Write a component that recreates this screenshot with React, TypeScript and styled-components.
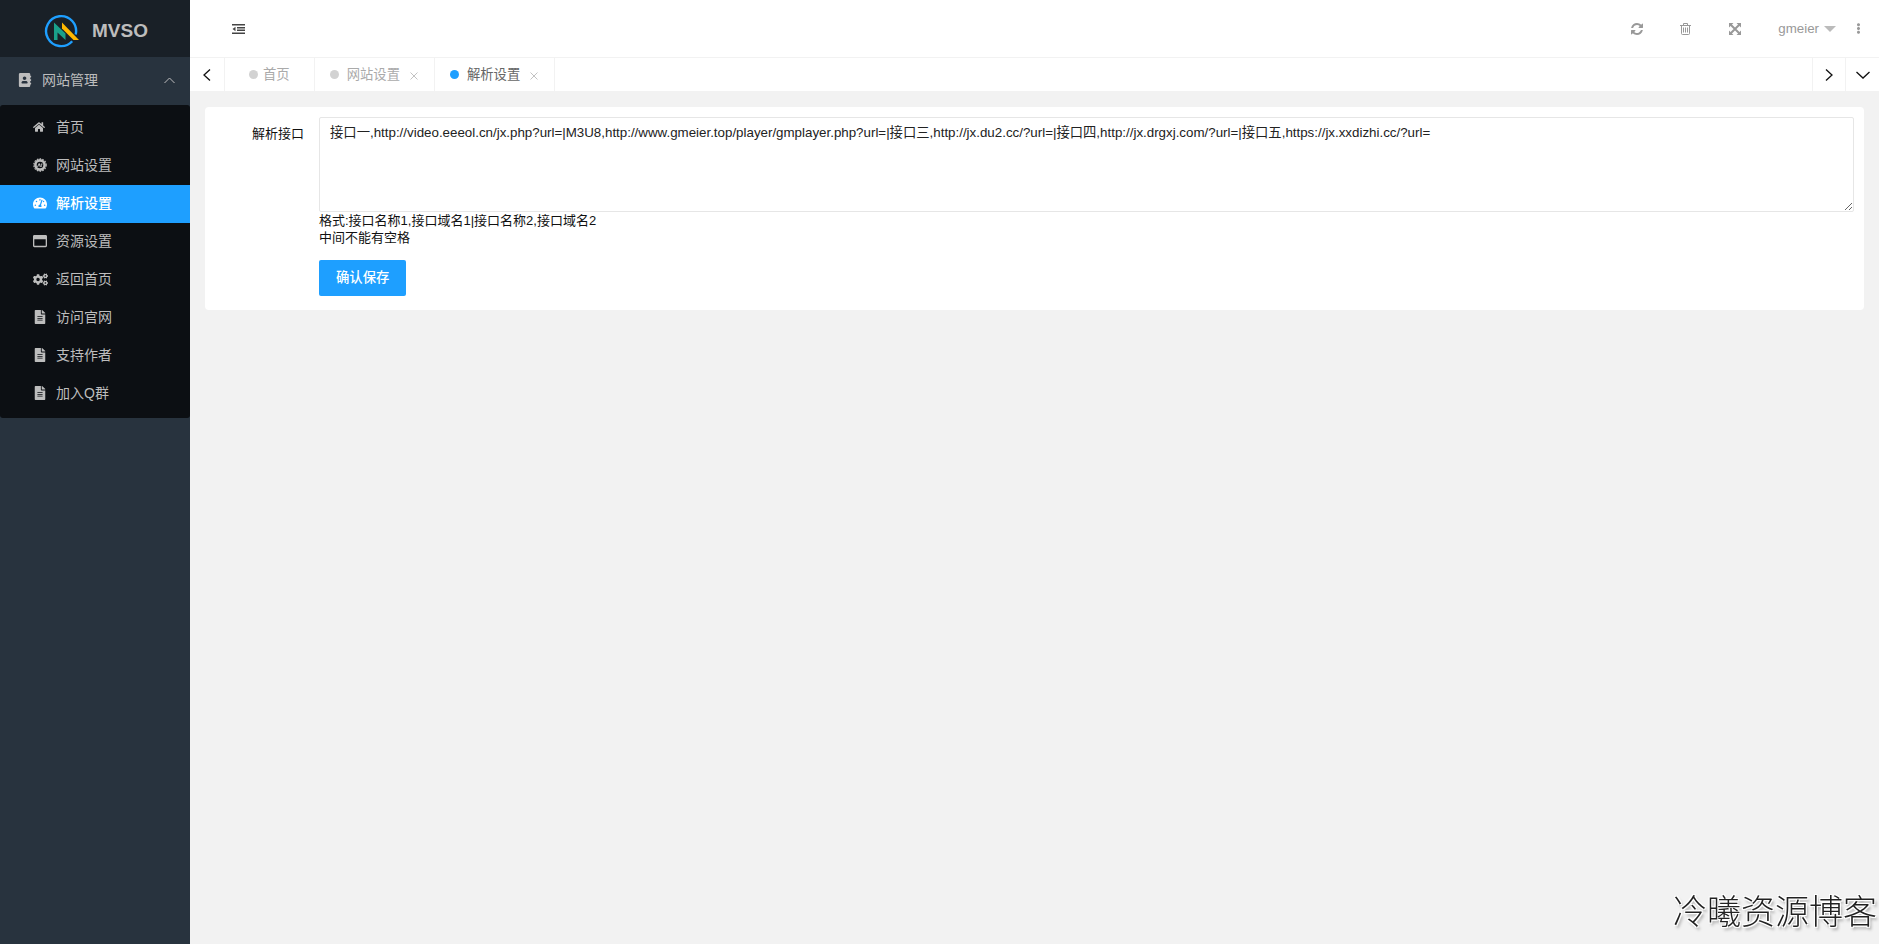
import React from 'react';
import styled, { createGlobalStyle, css } from 'styled-components';
import {
  FaAddressBook,
  FaCogs,
  FaEllipsisV,
  FaFileAlt,
  FaHome,
  FaRegWindowMaximize,
  FaTachometerAlt,
} from 'react-icons/fa';

const GlobalStyle = createGlobalStyle`
  *, *::before, *::after { box-sizing: border-box; }
  body {
    margin: 0;
    background: #f2f2f2;
    color: #111;
    font-family: "Liberation Sans", "Noto Sans CJK SC", sans-serif;
    font-size: 13px;
  }
  button, textarea { font-family: inherit; }
  button { border: 0; padding: 0; background: none; color: inherit; cursor: pointer; }
  a { color: inherit; text-decoration: none; }
  svg { display: block; flex: none; }
`;

const Shell = styled.div`
  display: flex;
  min-height: 100vh;
`;

const Sidebar = styled.aside`
  flex: none;
  width: 190px;
  background: #28333e;
  color: #bdbdbd;
`;

const Brand = styled.a`
  display: flex;
  align-items: center;
  justify-content: center;
  gap: 13px;
  height: 57px;
  padding: 4px 0 0 2px;
  background: #192027;
  font-size: 19px;
  font-weight: bold;
`;

const GroupButton = styled.button`
  display: flex;
  align-items: center;
  gap: 10px;
  width: 100%;
  height: 48px;
  padding: 0 15px 2px 18px;
  font-size: 14px;
  text-align: left;
`;

const MenuLabel = styled.span`
  flex: 1;
  padding-bottom: 2px;
`;

const SubMenu = styled.nav`
  padding: 4px 0 5px;
  border-radius: 3px;
  background: #0c0f13;
`;

const MenuLink = styled.a<{ $active?: boolean }>`
  display: flex;
  align-items: center;
  gap: 8px;
  height: 38px;
  padding: 0 0 2px 33px;
  font-size: 14px;
  ${(p) => p.$active && css`background: #1e9fff; color: #fff; font-weight: 500;`}
`;

const IconSlot = styled.span`
  display: flex;
  flex: none;
  width: 15px;
`;

const Main = styled.div`
  flex: 1;
  min-width: 0;
`;

const TopBar = styled.header`
  display: flex;
  align-items: center;
  justify-content: space-between;
  height: 57px;
  padding-left: 16px;
  background: #fff;
  color: #999;
`;

const Tools = styled.div`
  display: flex;
  align-items: center;
`;

const ToolButton = styled.button<{ $width?: number; $dark?: boolean }>`
  display: flex;
  align-items: center;
  justify-content: center;
  width: ${(p) => p.$width ?? 49}px;
  height: 57px;
  ${(p) => p.$dark && css`color: #444;`}
`;

const UserButton = styled.button`
  display: flex;
  align-items: center;
  gap: 5px;
  height: 57px;
  padding: 0 2px 0 19px;
  color: #999;
`;

const Caret = styled.i`
  border: 6px solid transparent;
  border-top-color: #bbb;
  border-bottom: 0;
`;

const TabBar = styled.div`
  display: flex;
  height: 34px;
  border-top: 1px solid #f2f2f2;
  background: #fff;
`;

const TabList = styled.div`
  display: flex;
  flex: 1;
`;

const TabArrow = styled.button<{ $side: 'left' | 'right' }>`
  display: flex;
  align-items: center;
  justify-content: center;
  width: ${(p) => (p.$side === 'left' ? 35 : 33)}px;
  border-${(p) => (p.$side === 'left' ? 'right' : 'left')}: 1px solid #f2f2f2;
  color: #111;

  &:last-child { width: 34px; }
`;

const Tab = styled.div<{ $active?: boolean; $home?: boolean }>`
  display: flex;
  align-items: center;
  gap: ${(p) => (p.$home ? 5 : 8)}px;
  padding: ${(p) => (p.$home ? '0 24px' : '0 16px 0 15px')};
  border-right: 1px solid #f2f2f2;
  color: ${(p) => (p.$active ? '#666' : '#aaa')};
`;

const TabLabel = styled.button`
  padding-bottom: 2px;
`;

const Dot = styled.i<{ $active?: boolean }>`
  width: 9px;
  height: 9px;
  border-radius: 50%;
  background: ${(p) => (p.$active ? '#1e9fff' : '#d2d2d2')};
`;

const CloseButton = styled.button`
  margin: 2px 0 0 2px;
  color: #c2c2c2;
`;

const Card = styled.form`
  display: flex;
  margin: 16px 15px;
  padding: 10px 10px 14px;
  border-radius: 4px;
  background: #fff;
`;

const Label = styled.label`
  flex: none;
  width: 104px;
  padding: 7px 15px 0 0;
  line-height: 20px;
  text-align: right;
`;

const Field = styled.div`
  flex: 1;
  min-width: 0;
`;

const TextArea = styled.textarea`
  display: block;
  width: 100%;
  height: 95px;
  padding: 5px 10px;
  border: 1px solid #e6e6e6;
  border-radius: 2px;
  outline: none;
  background: #fff;
  color: #222;
  line-height: 20px;
  resize: vertical;
`;

const Hint = styled.p`
  margin: 0 0 14px;
  line-height: 17px;
`;

const SaveButton = styled.button`
  height: 36px;
  padding: 0 17px 3px;
  border-radius: 2px;
  background: #1e9fff;
  color: #fff;
  font-weight: 500;
`;

const Watermark = styled.div`
  position: fixed;
  right: 2px;
  bottom: 14px;
  color: #222;
  font-family: "Noto Sans CJK SC", sans-serif;
  font-size: 34px;
  font-weight: 300;
  line-height: 40px;
  text-shadow: 1px 1px 0 #fff, -1px -1px 0 #fff, 1px -1px 0 #fff, -1px 1px 0 #fff, 2px 3px 3px #999;
  pointer-events: none;
`;

const Logo = () => (
  <svg width="35" height="34" viewBox="0 0 35 34" fill="none" aria-hidden="true">
    <path d="M28.2 27.2A15 15 0 1 1 31.7 20.5" stroke="#1e9fff" strokeWidth="2.4" />
    <path d="M10 8.5L21.5 19.5V26L13.5 18.5V26H10Z" fill="#1aa08a" />
    <path d="M18 8.5L35 26H29.5L18 14.5Z" fill="#ffb800" />
  </svg>
);

const BadgeIcon = () => (
  <svg width="14" height="14" viewBox="0 0 14 14" fill="none" stroke="currentColor" aria-hidden="true">
    <circle cx="7" cy="7" r="4.6" strokeWidth="2.6" />
    <circle cx="7" cy="7" r="6.2" strokeWidth="1.2" strokeDasharray="1.6 1.2" />
    <path d="M4.5 9L6.2 5.5L7.3 9M8.2 9V6H9.5" strokeWidth="1" />
  </svg>
);

const ShrinkIcon = () => (
  <svg width="13" height="10" viewBox="0 0 13 10" fill="currentColor" aria-hidden="true">
    <path d="M0 0h13v1.5H0zM5 3h8v1.5H5zM5 5.5h8V7H5zM0 8.5h13V10H0zM3.5 2.8v4.4L0.5 5z" />
  </svg>
);

const RefreshIcon = () => (
  <svg width="12" height="12" viewBox="0 0 1536 1536" fill="currentColor" aria-hidden="true">
    <path d="M1511 928q0 5-1 7-64 268-268 434.500T764 1536q-146 0-282.500-55T238 1324l-129 129q-19 19-45 19t-45-19-19-45V960q0-26 19-45t45-19h448q26 0 45 19t19 45-19 45l-137 137q71 66 161 102t187 36q134 0 250-65t186-179q11-17 53-117 8-23 30-23h192q13 0 22.500 9.500t9.500 22.500zm25-800v448q0 26-19 45t-45 19h-448q-26 0-45-19t-19-45 19-45l138-138Q969 256 768 256q-134 0-250 65T332 500q-11 17-53 117-8 23-30 23H50q-13 0-22.500-9.500T18 608v-7q65-268 270-434.500T768 0q146 0 284 55.500T1297 212l130-129q19-19 45-19t45 19 19 45z" />
  </svg>
);

const TrashIcon = () => (
  <svg width="11" height="12" viewBox="0 0 11 12" fill="none" stroke="currentColor" aria-hidden="true">
    <path d="M0 2.5h11M3.5 2.5v-2h4v2M1.5 2.5v8q0 1 1 1h6q1 0 1-1v-8M3.5 4.5v5M5.5 4.5v5M7.5 4.5v5" />
  </svg>
);

const ExpandIcon = () => (
  <svg width="12" height="12" viewBox="0 0 12 12" fill="currentColor" aria-hidden="true">
    <path d="M0 0H4.5L0 4.5ZM12 0V4.5L7.5 0ZM0 12V7.5L4.5 12ZM12 12H7.5L12 7.5Z" />
    <path d="M1.5 1.5L10.5 10.5M10.5 1.5L1.5 10.5" stroke="currentColor" strokeWidth="2" />
  </svg>
);

const chevrons = {
  left: { w: 8, h: 12, d: 'M7 0.5L1 6L7 11.5' },
  right: { w: 8, h: 12, d: 'M1 0.5L7 6L1 11.5' },
  down: { w: 14, h: 8, d: 'M0.5 1L7 7L13.5 1' },
  up: { w: 11, h: 7, d: 'M0.5 6L5.5 1L10.5 6' },
  cross: { w: 8, h: 8, d: 'M0.5 0.5L7.5 7.5M7.5 0.5L0.5 7.5' },
};

const Stroke = ({ kind, weight = 1 }: { kind: keyof typeof chevrons; weight?: number }) => {
  const { w, h, d } = chevrons[kind];
  return (
    <svg width={w} height={h} viewBox={`0 0 ${w} ${h}`} fill="none" stroke="currentColor" strokeWidth={weight} aria-hidden="true">
      <path d={d} />
    </svg>
  );
};

const menu = [
  { label: '首页', icon: <FaHome size={12} /> },
  { label: '网站设置', icon: <BadgeIcon /> },
  { label: '解析设置', icon: <FaTachometerAlt size={14} />, active: true },
  { label: '资源设置', icon: <FaRegWindowMaximize size={14} /> },
  { label: '返回首页', icon: <FaCogs size={15} /> },
  { label: '访问官网', icon: <FaFileAlt size={14} /> },
  { label: '支持作者', icon: <FaFileAlt size={14} /> },
  { label: '加入Q群', icon: <FaFileAlt size={14} /> },
];

const tabs = [
  { label: '首页', home: true },
  { label: '网站设置' },
  { label: '解析设置', active: true },
];

const sources =
  '接口一,http://video.eeeol.cn/jx.php?url=|M3U8,http://www.gmeier.top/player/gmplayer.php?url=|接口三,http://jx.du2.cc/?url=|接口四,http://jx.drgxj.com/?url=|接口五,https://jx.xxdizhi.cc/?url=';

export default function App() {
  return (
    <>
      <GlobalStyle />
      <Shell>
        <Sidebar>
          <Brand href="#">
            <Logo />
            MVSO
          </Brand>
          <GroupButton type="button" aria-expanded="true">
            <FaAddressBook size={14} />
            <MenuLabel>网站管理</MenuLabel>
            <Stroke kind="up" />
          </GroupButton>
          <SubMenu>
            {menu.map((m) => (
              <MenuLink key={m.label} href="#" $active={m.active}>
                <IconSlot>{m.icon}</IconSlot>
                <MenuLabel>{m.label}</MenuLabel>
              </MenuLink>
            ))}
          </SubMenu>
        </Sidebar>
        <Main>
          <TopBar>
            <ToolButton type="button" $width={64} $dark aria-label="收起菜单"><ShrinkIcon /></ToolButton>
            <Tools>
              <ToolButton type="button" aria-label="刷新"><RefreshIcon /></ToolButton>
              <ToolButton type="button" aria-label="清理缓存"><TrashIcon /></ToolButton>
              <ToolButton type="button" aria-label="全屏"><ExpandIcon /></ToolButton>
              <UserButton type="button">gmeier<Caret /></UserButton>
              <ToolButton type="button" $width={41} aria-label="更多"><FaEllipsisV size={11} /></ToolButton>
            </Tools>
          </TopBar>
          <TabBar>
            <TabArrow type="button" $side="left" aria-label="向左"><Stroke kind="left" weight={1.3} /></TabArrow>
            <TabList>
              {tabs.map((t) => (
                <Tab key={t.label} $active={t.active} $home={t.home}>
                  <Dot $active={t.active} />
                  <TabLabel type="button">{t.label}</TabLabel>
                  {!t.home && <CloseButton type="button" aria-label="关闭"><Stroke kind="cross" /></CloseButton>}
                </Tab>
              ))}
            </TabList>
            <TabArrow type="button" $side="right" aria-label="向右"><Stroke kind="right" weight={1.3} /></TabArrow>
            <TabArrow type="button" $side="right" aria-label="更多标签"><Stroke kind="down" weight={1.3} /></TabArrow>
          </TabBar>
          <Card onSubmit={(e) => e.preventDefault()}>
            <Label htmlFor="sources">解析接口</Label>
            <Field>
              <TextArea id="sources" spellCheck={false} defaultValue={sources} />
              <Hint>
                格式:接口名称1,接口域名1|接口名称2,接口域名2
                <br />
                中间不能有空格
              </Hint>
              <SaveButton type="submit">确认保存</SaveButton>
            </Field>
          </Card>
        </Main>
      </Shell>
      <Watermark>冷曦资源博客</Watermark>
    </>
  );
}
